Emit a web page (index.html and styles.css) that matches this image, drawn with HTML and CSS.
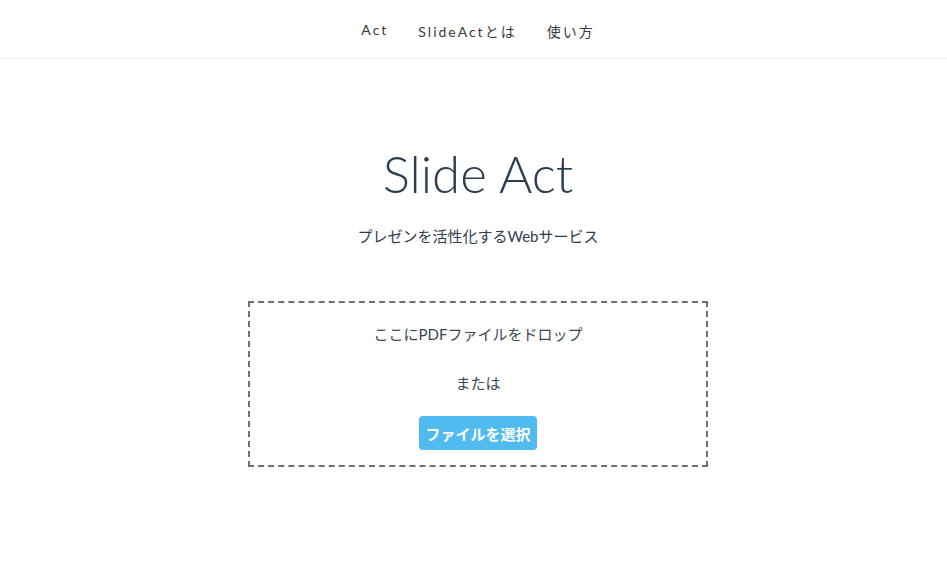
FILE: index.html
```html
<!DOCTYPE html>
<html lang="ja">
<head>
<meta charset="utf-8">
<title>Slide Act</title>
<link rel="stylesheet" href="styles.css">
</head>
<body>
<header class="header">
  <nav class="nav">
    <a class="nav-link" href="#">Act</a>
    <a class="nav-link" href="#">SlideActとは</a>
    <a class="nav-link" href="#">使い方</a>
  </nav>
</header>
<main class="main">
  <h1 class="title">Slide Act</h1>
  <p class="subtitle">プレゼンを活性化するWebサービス</p>
  <div class="drop">
    <p class="drop-text">ここにPDFファイルをドロップ</p>
    <p class="drop-or">または</p>
    <button class="btn">ファイルを選択</button>
  </div>
</main>
</body>
</html>
```
FILE: styles.css
```css
html, body {
  margin: 0;
  padding: 0;
  background: #fff;
}
body {
  font-family: Lato, "Noto Sans CJK JP", sans-serif;
  color: #2c3e50;
}
.header {
  height: 58px;
  border-bottom: 1px solid #ebebeb;
  display: flex;
  align-items: center;
  justify-content: center;
  padding-left: 9px;
}
.nav {
  display: flex;
  gap: 30px;
  padding-top: 4px;
}
.nav-link {
  font-size: 14px;
  letter-spacing: 2px;
  color: #3a3a3a;
  text-decoration: none;
  font-family: Lato, "Noto Sans CJK JP", sans-serif;
}
.main {
  display: flex;
  flex-direction: column;
  align-items: center;
  padding-left: 9px;
}
.title {
  margin: 85px 0 0;
  font-size: 51px;
  font-weight: 300;
  line-height: 60px;
  color: #2c3e50;
}
.subtitle {
  margin: 21px 0 0;
  font-size: 15px;
  line-height: 22px;
}
.drop {
  margin-top: 54px;
  width: 456px;
  height: 162px;
  border: 2px dashed #6b7079;
  display: flex;
  flex-direction: column;
  align-items: center;
}
.drop-text {
  margin: 20px 0 0;
  font-size: 15px;
  line-height: 22px;
  color: #3b4654;
}
.drop-or {
  margin: 27px 0 0;
  font-size: 15px;
  line-height: 22px;
  color: #3b4654;
}
.btn {
  margin-top: 22px;
  width: 118px;
  height: 34px;
  border: none;
  border-radius: 4px;
  background: #4fbbee;
  color: #fff;
  font-family: "Noto Sans CJK JP", sans-serif;
  font-weight: 700;
  font-size: 15px;
  padding: 0;
}
```
